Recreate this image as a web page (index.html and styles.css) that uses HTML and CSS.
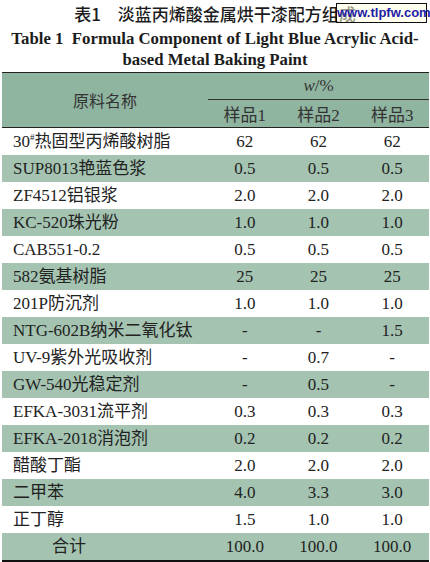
FILE: index.html
```html
<!DOCTYPE html>
<html lang="zh-CN">
  <head>
    <meta charset="UTF-8" />
    <title>表1 淡蓝丙烯酸金属烘干漆配方组成</title>
    <link rel="stylesheet" href="styles.css">
  </head>
  <body>
    <div class="caption">
      <h1 class="title-cn">表1　淡蓝丙烯酸金属烘干漆配方组成</h1>
      <h2 class="title-en">Table 1&nbsp; Formula Component of Light Blue Acrylic Acid-<br />based Metal Baking Paint</h2>
      <div class="watermark">www.tlpfw.com</div>
    </div>

    <table class="formula">
      <colgroup>
        <col class="col-name" />
        <col class="col-val" />
        <col class="col-val" />
        <col class="col-val" />
      </colgroup>
      <thead>
        <tr class="head-top">
          <th rowspan="2" class="name-head">原料名称</th>
          <th colspan="3" class="unit"><i>w</i>/%</th>
        </tr>
        <tr class="head-sub">
          <th>样品1</th>
          <th>样品2</th>
          <th>样品3</th>
        </tr>
      </thead>
      <tbody>
        <tr><td>30<sup>#</sup>热固型丙烯酸树脂</td><td>62</td><td>62</td><td>62</td></tr>
        <tr><td>SUP8013艳蓝色浆</td><td>0.5</td><td>0.5</td><td>0.5</td></tr>
        <tr><td>ZF4512铝银浆</td><td>2.0</td><td>2.0</td><td>2.0</td></tr>
        <tr><td>KC-520珠光粉</td><td>1.0</td><td>1.0</td><td>1.0</td></tr>
        <tr><td>CAB551-0.2</td><td>0.5</td><td>0.5</td><td>0.5</td></tr>
        <tr><td>582氨基树脂</td><td>25</td><td>25</td><td>25</td></tr>
        <tr><td>201P防沉剂</td><td>1.0</td><td>1.0</td><td>1.0</td></tr>
        <tr><td>NTG-602B纳米二氧化钛</td><td>-</td><td>-</td><td>1.5</td></tr>
        <tr><td>UV-9紫外光吸收剂</td><td>-</td><td>0.7</td><td>-</td></tr>
        <tr><td>GW-540光稳定剂</td><td>-</td><td>0.5</td><td>-</td></tr>
        <tr><td>EFKA-3031流平剂</td><td>0.3</td><td>0.3</td><td>0.3</td></tr>
        <tr><td>EFKA-2018消泡剂</td><td>0.2</td><td>0.2</td><td>0.2</td></tr>
        <tr><td>醋酸丁酯</td><td>2.0</td><td>2.0</td><td>2.0</td></tr>
        <tr><td>二甲苯</td><td>4.0</td><td>3.3</td><td>3.0</td></tr>
        <tr><td>正丁醇</td><td>1.5</td><td>1.0</td><td>1.0</td></tr>
        <tr class="total"><td>合计</td><td>100.0</td><td>100.0</td><td>100.0</td></tr>
      </tbody>
    </table>
  </body>
</html>
```

FILE: styles.css
```css
body {
  margin: 0;
  background: #fff;
  color: #222;
  font-family: "Liberation Serif", "Noto Sans CJK SC", serif;
}

.caption {
  position: relative;
  text-align: center;
}

.title-cn {
  margin: 0;
  height: 28px;
  line-height: 27px;
  font-family: "Noto Sans CJK SC", sans-serif;
  font-size: 17px;
  font-weight: 500;
  color: #1c1c1c;
}

.title-en {
  margin: 0;
  line-height: 21px;
  font-size: 16.8px;
  font-weight: bold;
  color: #1c1c1c;
}

/* site stamp sits over the end of the title */
.watermark {
  position: absolute;
  top: 3px;
  left: 336px;
  width: 89px;
  height: 18px;
  border: 1px solid #111;
  background: rgba(255, 255, 225, 0.55);
  color: #1e20a8;
  font-family: "Liberation Sans", sans-serif;
  font-size: 13px;
  font-weight: bold;
  line-height: 18px;
  text-align: center;
}

.formula {
  margin: 2px 1px 0 2px;
  width: 427px;
  border-collapse: collapse;
  table-layout: fixed;
  font-size: 17px;
  border-top: 1.5px solid #222;
  border-bottom: 2px solid #111;
}

.col-name {
  width: 206px;
}

th {
  font-weight: normal;
  color: #333;
  background: #8fb4a0;
}

.head-top th {
  height: 26px;
  padding: 0;
}

.name-head {
  text-align: center;
  border-bottom: 1px solid #222;
  font-family: "Noto Sans CJK SC", sans-serif;
  font-size: 16px;
}

.unit {
  border-bottom: 1px solid #333;
  font-size: 17px;
}

.head-sub th {
  height: 27px;
  padding: 0;
  border-bottom: 1px solid #222;
  font-size: 17px;
}

td {
  height: 27px;
  padding: 0;
  text-align: center;
  line-height: 27px;
  white-space: nowrap;
}

td:first-child {
  text-align: left;
  padding-left: 11px;
}

tbody tr:nth-child(even) td {
  background: #a4c4b1;
}

sup {
  font-size: 9px;
  line-height: 0;
  vertical-align: 7px;
}

.total td:first-child {
  padding-left: 50px;
}
```
